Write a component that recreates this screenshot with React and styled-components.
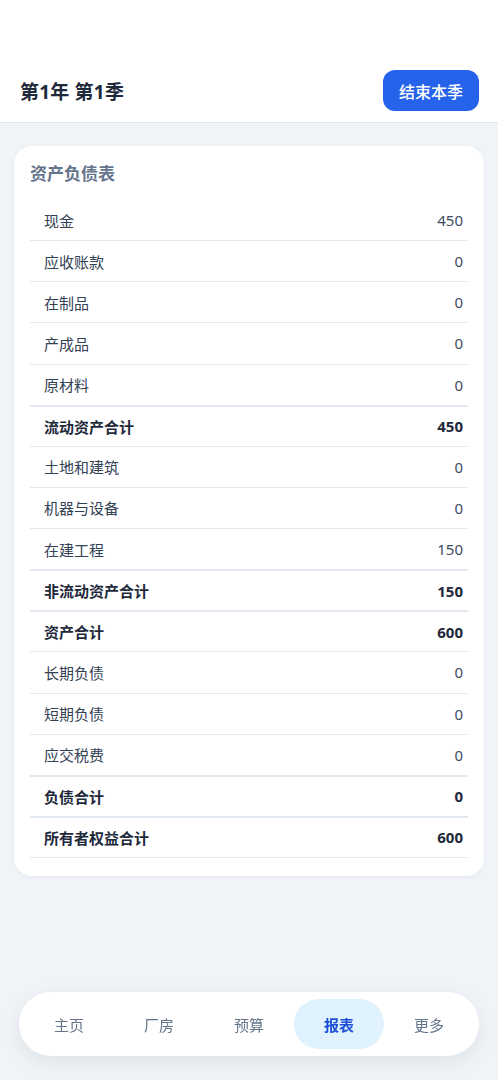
import React from "react";
import styled, { createGlobalStyle } from "styled-components";

const Global = createGlobalStyle`
  html, body { margin: 0; padding: 0; }
  body {
    background: #f0f4f8;
    font-family: "Noto Sans", "Noto Sans CJK SC", sans-serif;
    color: #1e293b;
    -webkit-font-smoothing: antialiased;
  }
  * { box-sizing: border-box; }
`;

const Page = styled.div`
  min-height: 1080px;
  background: #f0f4f8;
  padding-bottom: 120px;
`;

const Header = styled.header`
  display: flex;
  align-items: center;
  justify-content: space-between;
  background: #ffffff;
  padding: 70px 19px 11px 20px;
  border-bottom: 1px solid #e2e8f0;
`;

const Title = styled.h1`
  margin: 0;
  font-size: 19px;
  font-weight: 700;
  color: #1e293b;
  letter-spacing: 0.2px;
`;

const EndButton = styled.button`
  height: 41px;
  padding: 0 16px;
  border: none;
  border-radius: 12px;
  background: #2563eb;
  color: #ffffff;
  font-family: inherit;
  font-size: 16px;
  font-weight: 500;
`;

const Card = styled.section`
  margin: 23px 14px 0;
  background: #ffffff;
  border-radius: 18px;
  padding: 14px 16px 18px;
  box-shadow: 0 1px 4px rgba(15, 23, 42, 0.05);
`;

const CardTitle = styled.h2`
  margin: 0 0 12px;
  font-size: 17px;
  font-weight: 700;
  color: #64748b;
  line-height: 28px;
`;

const Row = styled.div`
  display: flex;
  align-items: center;
  justify-content: space-between;
  height: ${(p) => (p.$total ? "42.125px" : "41.125px")};
  padding: 0 5px 0 14px;
  border-bottom: 1px solid #e5e9ef;
  border-top: ${(p) => (p.$total ? "2px solid #e2e8f0" : "none")};
  margin-top: ${(p) => (p.$total ? "-1px" : "0")};
  font-size: 15px;
  font-weight: ${(p) => (p.$total ? 700 : 400)};
  color: ${(p) => (p.$total ? "#1e293b" : "#334155")};
`;

const Value = styled.span`
  color: ${(p) => (p.$total ? "#1e293b" : "#3f4b5e")};
`;

const Nav = styled.nav`
  position: fixed;
  left: 19px;
  right: 19px;
  bottom: 24px;
  height: 64px;
  display: flex;
  align-items: center;
  padding: 0 5px;
  background: #ffffff;
  border-radius: 32px;
  box-shadow: 0 6px 20px rgba(15, 23, 42, 0.08);
`;

const NavItem = styled.div`
  flex: 1;
  height: 50px;
  display: flex;
  align-items: center;
  justify-content: center;
  border-radius: 25px;
  font-size: 15px;
  font-weight: ${(p) => (p.$active ? 700 : 400)};
  color: ${(p) => (p.$active ? "#1d4ed8" : "#64748b")};
  background: ${(p) => (p.$active ? "#e0f2fe" : "transparent")};
`;

const rows = [
  ["现金", 450],
  ["应收账款", 0],
  ["在制品", 0],
  ["产成品", 0],
  ["原材料", 0],
  ["流动资产合计", 450, true],
  ["土地和建筑", 0],
  ["机器与设备", 0],
  ["在建工程", 150],
  ["非流动资产合计", 150, true],
  ["资产合计", 600, true],
  ["长期负债", 0],
  ["短期负债", 0],
  ["应交税费", 0],
  ["负债合计", 0, true],
  ["所有者权益合计", 600, true],
];

const navs = ["主页", "厂房", "预算", "报表", "更多"];

export default function App() {
  return (
    <Page>
      <Global />
      <Header>
        <Title>第1年 第1季</Title>
        <EndButton>结束本季</EndButton>
      </Header>
      <Card>
        <CardTitle>资产负债表</CardTitle>
        {rows.map(([label, value, total]) => (
          <Row key={label} $total={total}>
            <span>{label}</span>
            <Value $total={total}>{value}</Value>
          </Row>
        ))}
      </Card>
      <Nav>
        {navs.map((n) => (
          <NavItem key={n} $active={n === "报表"}>
            {n}
          </NavItem>
        ))}
      </Nav>
    </Page>
  );
}
